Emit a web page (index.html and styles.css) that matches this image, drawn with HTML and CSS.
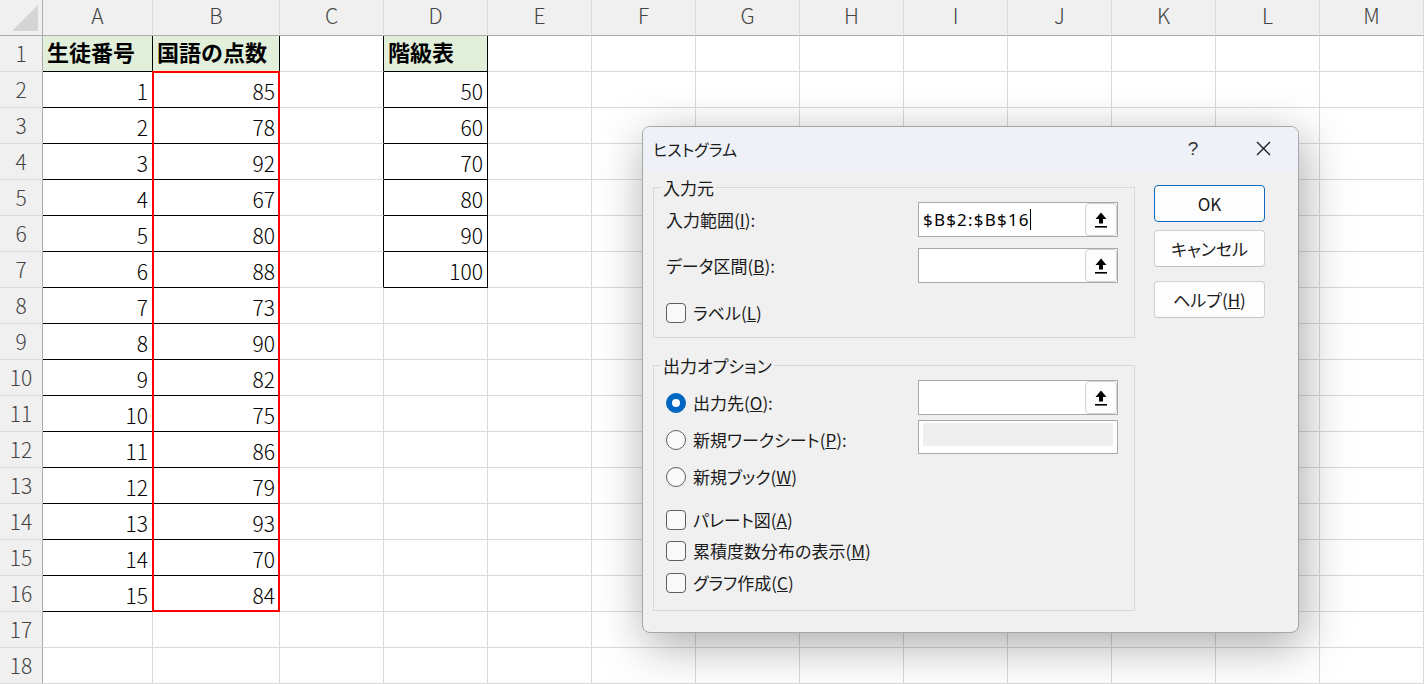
FILE: index.html
```html
<!DOCTYPE html>
<html lang="ja">
<head>
<meta charset="utf-8">
<title>ヒストグラム</title>
<link rel="stylesheet" href="styles.css">
</head>
<body>
<div class="sheet">
  <div class="grid">
    <div class="corner"><svg width="42" height="35" viewBox="0 0 42 35"><polygon points="12,31 38,31 38,5" fill="#d4d4d4"/></svg></div>
    <div class="colh">A</div><div class="colh">B</div><div class="colh">C</div><div class="colh">D</div><div class="colh">E</div><div class="colh">F</div><div class="colh">G</div><div class="colh">H</div><div class="colh">I</div><div class="colh">J</div><div class="colh">K</div><div class="colh">L</div><div class="colh">M</div>

    <div class="rowh">1</div><div class="hd bk">生徒番号</div><div class="hd bk">国語の点数</div><div class="bl"></div><div class="hd bk">階級表</div><div></div><div></div><div></div><div></div><div></div><div></div><div></div><div></div><div></div>
    <div class="rowh">2</div><div class="num bk">1</div><div class="num bk">85</div><div class="bl"></div><div class="num bk">50</div><div></div><div></div><div></div><div></div><div></div><div></div><div></div><div></div><div></div>
    <div class="rowh">3</div><div class="num bk">2</div><div class="num bk">78</div><div class="bl"></div><div class="num bk">60</div><div></div><div></div><div></div><div></div><div></div><div></div><div></div><div></div><div></div>
    <div class="rowh">4</div><div class="num bk">3</div><div class="num bk">92</div><div class="bl"></div><div class="num bk">70</div><div></div><div></div><div></div><div></div><div></div><div></div><div></div><div></div><div></div>
    <div class="rowh">5</div><div class="num bk">4</div><div class="num bk">67</div><div class="bl"></div><div class="num bk">80</div><div></div><div></div><div></div><div></div><div></div><div></div><div></div><div></div><div></div>
    <div class="rowh">6</div><div class="num bk">5</div><div class="num bk">80</div><div class="bl"></div><div class="num bk">90</div><div></div><div></div><div></div><div></div><div></div><div></div><div></div><div></div><div></div>
    <div class="rowh">7</div><div class="num bk">6</div><div class="num bk">88</div><div class="bl"></div><div class="num bk">100</div><div></div><div></div><div></div><div></div><div></div><div></div><div></div><div></div><div></div>
    <div class="rowh">8</div><div class="num bk">7</div><div class="num bk">73</div><div></div><div></div><div></div><div></div><div></div><div></div><div></div><div></div><div></div><div></div><div></div>
    <div class="rowh">9</div><div class="num bk">8</div><div class="num bk">90</div><div></div><div></div><div></div><div></div><div></div><div></div><div></div><div></div><div></div><div></div><div></div>
    <div class="rowh">10</div><div class="num bk">9</div><div class="num bk">82</div><div></div><div></div><div></div><div></div><div></div><div></div><div></div><div></div><div></div><div></div><div></div>
    <div class="rowh">11</div><div class="num bk">10</div><div class="num bk">75</div><div></div><div></div><div></div><div></div><div></div><div></div><div></div><div></div><div></div><div></div><div></div>
    <div class="rowh">12</div><div class="num bk">11</div><div class="num bk">86</div><div></div><div></div><div></div><div></div><div></div><div></div><div></div><div></div><div></div><div></div><div></div>
    <div class="rowh">13</div><div class="num bk">12</div><div class="num bk">79</div><div></div><div></div><div></div><div></div><div></div><div></div><div></div><div></div><div></div><div></div><div></div>
    <div class="rowh">14</div><div class="num bk">13</div><div class="num bk">93</div><div></div><div></div><div></div><div></div><div></div><div></div><div></div><div></div><div></div><div></div><div></div>
    <div class="rowh">15</div><div class="num bk">14</div><div class="num bk">70</div><div></div><div></div><div></div><div></div><div></div><div></div><div></div><div></div><div></div><div></div><div></div>
    <div class="rowh">16</div><div class="num bk">15</div><div class="num bk">84</div><div></div><div></div><div></div><div></div><div></div><div></div><div></div><div></div><div></div><div></div><div></div>
    <div class="rowh">17</div><div></div><div></div><div></div><div></div><div></div><div></div><div></div><div></div><div></div><div></div><div></div><div></div><div></div>
    <div class="rowh">18</div><div></div><div></div><div></div><div></div><div></div><div></div><div></div><div></div><div></div><div></div><div></div><div></div><div></div>
  </div>

  <div class="sel"></div>

  <div class="dialog">
    <div class="titlebar">
      <div class="title">ヒストグラム</div>
      <div class="help">?</div>
      <div class="close"><svg width="15" height="15" viewBox="0 0 15 15"><path d="M1 1 L14 14 M14 1 L1 14" stroke="#1a1a1a" stroke-width="1.3" fill="none"/></svg></div>
    </div>
    <div class="dbody">
      <div class="left">
        <div class="group g1">
          <div class="gtitle">入力元</div>
          <div class="frow r1">
            <div class="lbl">入力範囲(<u>I</u>):</div>
            <div class="field">
              <div class="val">$B$2:$B$16<span class="caret"></span></div>
              <div class="pick"><svg width="14" height="16" viewBox="0 0 14 16"><path d="M7 0.5 L12.5 7 L9 7 L9 11.5 L5 11.5 L5 7 L1.5 7 Z" fill="#000"/><rect x="1" y="14" width="12" height="1.6" fill="#000"/></svg></div>
            </div>
          </div>
          <div class="frow r2">
            <div class="lbl">データ区間(<u>B</u>):</div>
            <div class="field">
              <div class="val"></div>
              <div class="pick"><svg width="14" height="16" viewBox="0 0 14 16"><path d="M7 0.5 L12.5 7 L9 7 L9 11.5 L5 11.5 L5 7 L1.5 7 Z" fill="#000"/><rect x="1" y="14" width="12" height="1.6" fill="#000"/></svg></div>
            </div>
          </div>
          <div class="opt c-label"><span class="cb"></span><span>ラベル(<u>L</u>)</span></div>
        </div>

        <div class="group g2">
          <div class="gtitle">出力オプション</div>
          <div class="orow o1">
            <div class="opt"><span class="rb on"><span class="dot"></span></span><span>出力先(<u>O</u>):</span></div>
            <div class="field">
              <div class="val"></div>
              <div class="pick"><svg width="14" height="16" viewBox="0 0 14 16"><path d="M7 0.5 L12.5 7 L9 7 L9 11.5 L5 11.5 L5 7 L1.5 7 Z" fill="#000"/><rect x="1" y="14" width="12" height="1.6" fill="#000"/></svg></div>
            </div>
          </div>
          <div class="orow o2">
            <div class="opt"><span class="rb"></span><span>新規ワークシート(<u>P</u>):</span></div>
            <div class="field off"><div class="fill"></div></div>
          </div>
          <div class="opt o3"><span class="rb"></span><span>新規ブック(<u>W</u>)</span></div>
          <div class="opt k1"><span class="cb"></span><span>パレート図(<u>A</u>)</span></div>
          <div class="opt k2"><span class="cb"></span><span>累積度数分布の表示(<u>M</u>)</span></div>
          <div class="opt k3"><span class="cb"></span><span>グラフ作成(<u>C</u>)</span></div>
        </div>
      </div>
      <div class="btns">
        <div class="btn ok">OK</div>
        <div class="btn cancel">キャンセル</div>
        <div class="btn helpbtn">ヘルプ(<u>H</u>)</div>
      </div>
    </div>
  </div>
</div>
</body>
</html>
```

FILE: styles.css
```css
html, body {
  margin: 0;
  padding: 0;
}
body {
  width: 1424px;
  height: 684px;
  overflow: hidden;
  background: #ffffff;
  font-family: "Noto Sans CJK JP", "Noto Sans", sans-serif;
  color: #000;
}
.sheet {
  position: relative;
  width: 1424px;
  height: 684px;
}
.grid {
  display: grid;
  grid-template-columns: 43px 110px 127px repeat(11, 104px);
  grid-template-rows: repeat(19, 36px);
}
.grid > div {
  box-sizing: border-box;
  border-right: 1px solid #dadada;
  border-bottom: 1px solid #dadada;
  overflow: hidden;
  white-space: nowrap;
}
.grid .corner {
  background: #f0f0f0;
  border-right-color: #ababab;
  border-bottom-color: #ababab;
}
.corner svg {
  display: block;
}
.grid .colh {
  background: #f0f0f0;
  border-bottom-color: #ababab;
  text-align: center;
  font-size: 21px;
  font-weight: 300;
  line-height: 30px;
  color: #444;
}
.grid .rowh {
  background: #f0f0f0;
  border-right-color: #ababab;
  text-align: center;
  font-size: 21px;
  font-weight: 300;
  line-height: 34px;
  color: #444;
}
.grid .num {
  text-align: right;
  padding: 3px 4px 0 0;
  font-size: 21px;
  font-weight: 300;
  line-height: 32px;
}
.grid .hd {
  background: #e2efda;
  font-weight: bold;
  font-size: 22px;
  line-height: 30px;
  padding-left: 4px;
}
.grid .bk {
  border-right-color: #000;
  border-bottom-color: #000;
}
.grid .bl {
  border-right-color: #000;
}

/* selection outline over B2:B16 */
.sel {
  position: absolute;
  left: 152px;
  top: 71px;
  width: 128px;
  height: 541px;
  box-sizing: border-box;
  border: 2px solid #ff0000;
  pointer-events: none;
}

/* dialog window */
.dialog {
  position: absolute;
  left: 642px;
  top: 126px;
  width: 657px;
  height: 507px;
  box-sizing: border-box;
  border: 1px solid #a6a6a6;
  border-radius: 8px;
  background: #f0f0f0;
  box-shadow: 4px 12px 48px rgba(0, 0, 0, 0.34);
  overflow: hidden;
  font-size: 17px;
  color: #1a1a1a;
  font-feature-settings: "palt";
}
.titlebar {
  height: 43px;
  background: #eef2f8;
  display: flex;
  align-items: center;
  padding-left: 10px;
}
.title {
  flex: 1;
  font-size: 16px;
  line-height: 20px;
}
.help {
  width: 46px;
  margin-right: 24px;
  text-align: center;
  font-family: "Liberation Sans", sans-serif;
  font-size: 19px;
  color: #333;
}
.close {
  width: 46px;
  margin-right: 12px;
  display: flex;
  justify-content: center;
}
.close svg {
  display: block;
}
.dbody {
  display: flex;
  align-items: flex-start;
  padding-left: 10px;
}
.left {
  width: 482px;
  margin-top: 17px;
}
.group {
  box-sizing: border-box;
  border: 1px solid #d8d8d8;
  padding: 0 16px 14px 12px;
}
.g2 {
  margin-top: 27px;
  padding-bottom: 17px;
}
.gtitle {
  width: max-content;
  height: 20px;
  line-height: 20px;
  margin: -10px 0 0 -5px;
  padding: 0 2px;
  background: #f0f0f0;
}
.frow {
  display: flex;
  align-items: center;
  height: 35px;
}
.r1 { margin-top: 4px; }
.r2 { margin-top: 11px; }
.lbl {
  flex: 1;
  line-height: 20px;
}
.field {
  width: 200px;
  height: 35px;
  box-sizing: border-box;
  border: 1px solid #a8a8a8;
  background: #ffffff;
  display: flex;
  align-items: stretch;
}
.val {
  flex: 1;
  padding-left: 4px;
  line-height: 33px;
  font-family: "Noto Sans", sans-serif;
  font-size: 17px;
  letter-spacing: 1.2px;
  color: #000;
  display: flex;
  align-items: center;
}
.caret {
  display: inline-block;
  width: 1px;
  height: 21px;
  background: #000;
}
.pick {
  width: 32px;
  box-sizing: border-box;
  border: 1px solid #d2d2d2;
  border-radius: 4px;
  background: #fdfdfd;
  display: flex;
  align-items: center;
  justify-content: center;
}
.pick svg {
  display: block;
}
.opt {
  flex: 1;
  display: flex;
  align-items: center;
  gap: 7px;
  height: 20px;
  line-height: 20px;
}
.c-label { margin-top: 20px; }
.orow {
  display: flex;
  align-items: flex-start;
}
.o1 { margin-top: 4px; }
.o1 .opt { margin-top: 13px; }
.o2 { margin-top: 5px; }
.o2 .opt { margin-top: 10px; }
.o2 .field { height: 34px; }
.o3 { margin-top: 13px; }
.k1 { margin-top: 23px; }
.k2 { margin-top: 11px; }
.k3 { margin-top: 12px; }
.field.off {
  padding: 2px 4px 7px 4px;
}
.fill {
  flex: 1;
  background: #efefef;
}
.cb {
  width: 20px;
  height: 20px;
  box-sizing: border-box;
  border: 1px solid #5f5f5f;
  border-radius: 4px;
  background: #f9f9f9;
  flex: none;
}
.rb {
  width: 20px;
  height: 20px;
  box-sizing: border-box;
  border: 1px solid #5f5f5f;
  border-radius: 50%;
  background: #f9f9f9;
  flex: none;
}
.rb.on {
  background: #0067c0;
  border-color: #0067c0;
  display: flex;
  align-items: center;
  justify-content: center;
}
.dot {
  width: 8px;
  height: 8px;
  border-radius: 50%;
  background: #ffffff;
}
.btns {
  width: 111px;
  margin-left: 19px;
  margin-top: 15px;
  display: flex;
  flex-direction: column;
}
.btn {
  box-sizing: border-box;
  height: 37px;
  border: 1px solid #d0d0d0;
  border-bottom-color: #c2c2c2;
  border-radius: 4px;
  background: #fdfdfd;
  display: flex;
  align-items: center;
  justify-content: center;
  line-height: 20px;
}
.btn.ok {
  border-color: #0f6cbd;
}
.cancel { margin-top: 8px; }
.helpbtn { margin-top: 14px; }
```
